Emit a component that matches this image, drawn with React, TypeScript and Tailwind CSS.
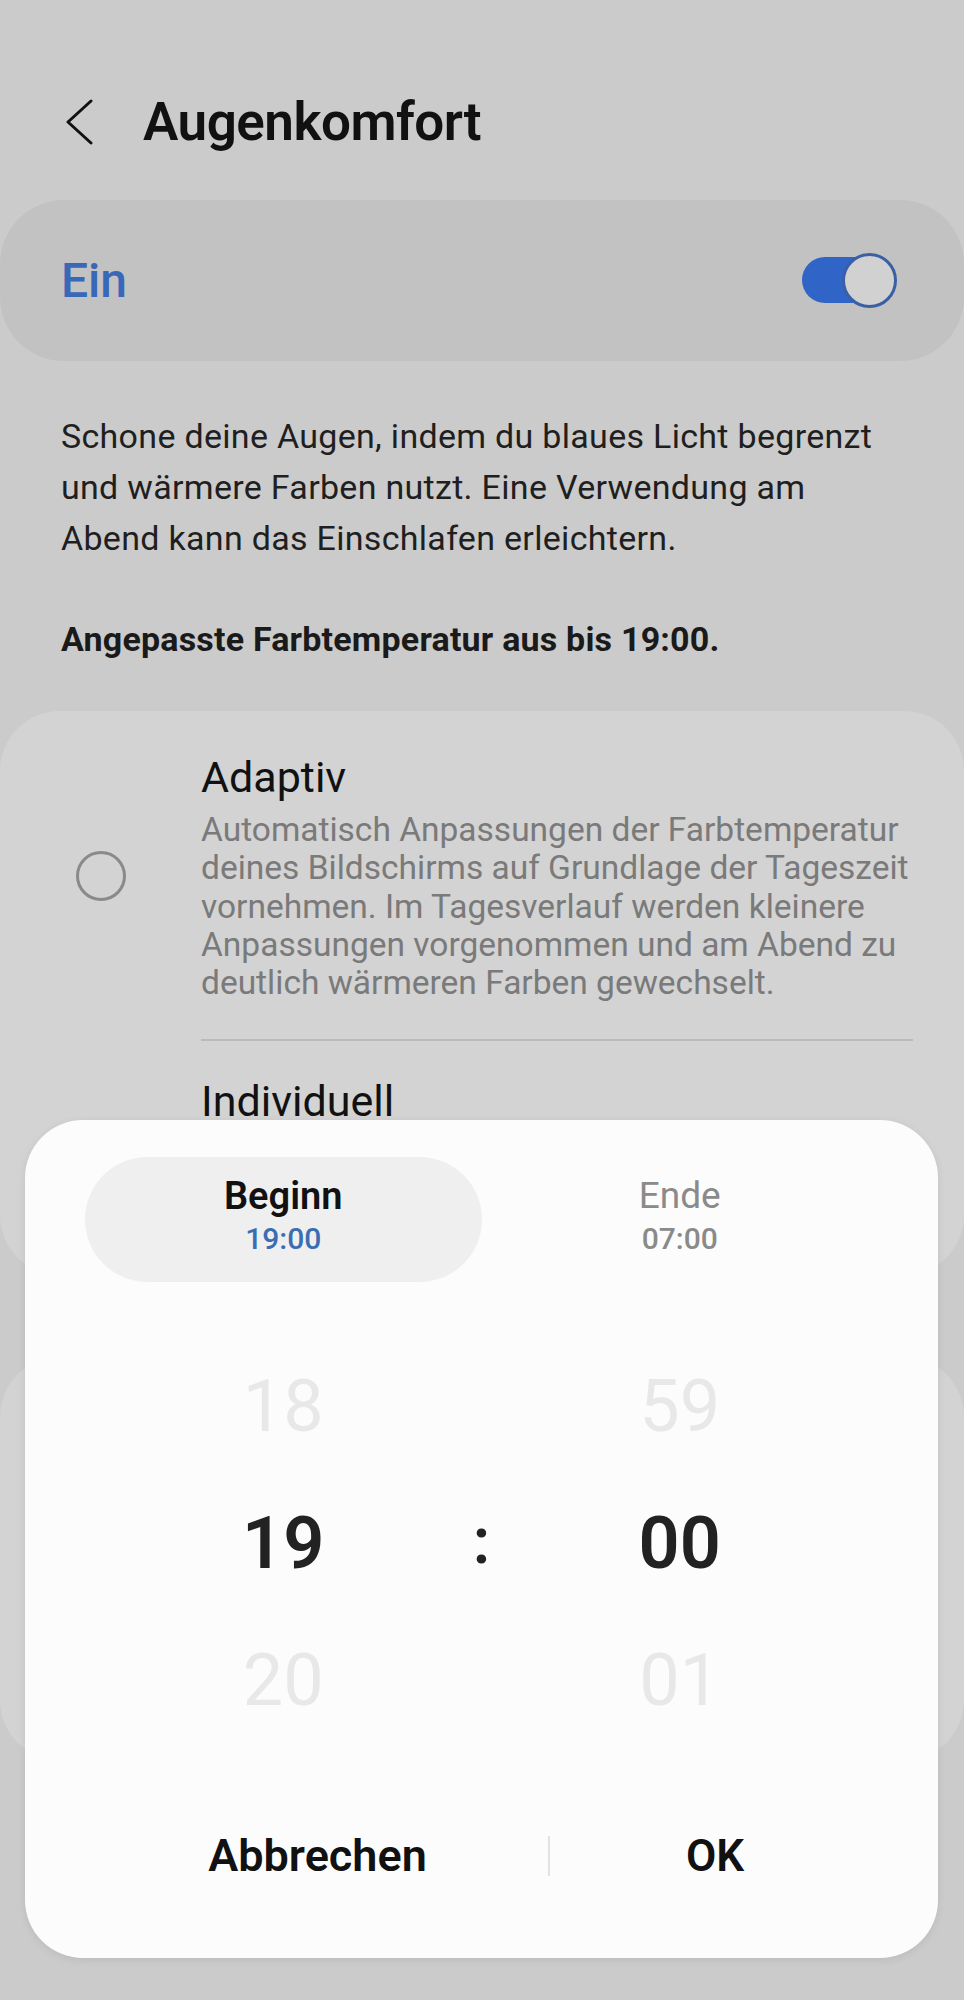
export default function App() {
  const font = { fontFamily: 'Roboto, "Noto Sans", sans-serif' };

  return (
    <div
      className="relative w-[964px] h-[2000px] overflow-hidden bg-[#cbcbcb] text-[#111]"
      style={font}
    >
      {/* Header */}
      <div className="flex items-center h-[90px] mt-[77px] pl-[64px]">
        <svg width="30" height="46" viewBox="0 0 30 46" fill="none">
          <path d="M27 2 L4 23 L27 44" stroke="#111" strokeWidth="3" strokeLinecap="round" strokeLinejoin="round" />
        </svg>
        <h1 className="ml-[49px] text-[53px] font-semibold leading-none tracking-[-0.5px]">Augenkomfort</h1>
      </div>

      {/* Ein switch card */}
      <div className="mt-[33px] h-[161px] rounded-[64px] bg-[#c2c2c2] flex items-center justify-between pl-[61px] pr-[67px]">
        <span className="text-[48px] font-medium text-[#3a68b8] leading-none">Ein</span>
        <div className="relative w-[95px] h-[55px]">
          <div className="absolute left-0 top-[4px] w-[80px] h-[46px] rounded-full bg-[#3064c6]" />
          <div className="absolute right-0 top-0 w-[55px] h-[55px] rounded-full border-[3px] border-[#3a5fa5] bg-[#d1d1d1]" />
        </div>
      </div>

      {/* Description */}
      <p className="mt-[50px] pl-[61px] whitespace-nowrap text-[34px] tracking-[0.3px] leading-[51px] text-[#1f1f1f]">
        Schone deine Augen, indem du blaues Licht begrenzt
        <br />
        und wärmere Farben nutzt. Eine Verwendung am
        <br />
        Abend kann das Einschlafen erleichtern.
      </p>
      <p className="mt-[50px] pl-[61px] whitespace-nowrap text-[34px] tracking-[0.2px] leading-[51px] font-bold text-[#1a1a1a]">
        Angepasste Farbtemperatur aus bis 19:00.
      </p>

      {/* Options card */}
      <div className="mt-[46px] h-[564px] rounded-[60px] bg-[#d3d3d3] flex">
        <div className="w-[201px] shrink-0 flex items-start justify-center pt-[140px]">
          <div className="w-[50px] h-[50px] rounded-full border-[3px] border-[#8a8a8a]" />
        </div>
        <div className="flex-1 min-w-0 pr-[51px] pt-[41px]">
          <div className="text-[43px] leading-[50px] text-[#111]">Adaptiv</div>
          <p className="mt-[9px] whitespace-nowrap text-[33.5px] leading-[38.3px] text-[#7a7a7a]">
            Automatisch Anpassungen der Farbtemperatur
            <br />
            deines Bildschirms auf Grundlage der Tageszeit
            <br />
            vornehmen. Im Tagesverlauf werden kleinere
            <br />
            Anpassungen vorgenommen und am Abend zu
            <br />
            deutlich wärmeren Farben gewechselt.
          </p>
          <div className="mt-[37px] h-[2px] bg-[#bababa]" />
          <div className="mt-[35px] text-[43px] leading-[50px] text-[#111]">Individuell</div>
        </div>
      </div>

      {/* Second card (behind dialog) */}
      <div className="mt-[82px] h-[403px] rounded-[60px] bg-[#d3d3d3]" />

      {/* Time picker dialog */}
      <div className="absolute left-[25px] top-[1120px] w-[913px] h-[838px] rounded-[58px] bg-[#fcfcfc] shadow-[0_2px_8px_rgba(0,0,0,0.08)]">
        <div className="flex px-[60px] pt-[37px]">
          <div className="w-[397px] h-[125px] rounded-full bg-[#efefef] flex flex-col items-center pt-[18px]">
            <span className="text-[38px] leading-[42px] font-semibold text-[#111]">Beginn</span>
            <span className="mt-[4px] text-[30px] leading-[36px] font-medium text-[#3a6db3]">19:00</span>
          </div>
          <div className="w-[397px] h-[125px] flex flex-col items-center pt-[18px]">
            <span className="text-[37px] leading-[42px] text-[#8a8a8a]">Ende</span>
            <span className="mt-[4px] text-[30px] leading-[36px] font-medium text-[#8a8a8a]">07:00</span>
          </div>
        </div>

        <div className="flex px-[60px] mt-[56px]">
          <div className="w-[397px] flex flex-col items-center">
            <div className="h-[137px] flex items-center text-[72px] text-[#e8e8e8]">18</div>
            <div className="h-[137px] flex items-center text-[72px] font-semibold text-[#222]">19</div>
            <div className="h-[137px] flex items-center text-[72px] text-[#e8e8e8]">20</div>
          </div>
          <div className="w-0 flex flex-col items-center">
            <div className="h-[137px]" />
            <div className="h-[137px] flex items-center text-[64px] font-semibold text-[#222] pb-[4px]">:</div>
          </div>
          <div className="w-[397px] flex flex-col items-center">
            <div className="h-[137px] flex items-center text-[72px] text-[#e8e8e8]">59</div>
            <div className="h-[137px] flex items-center text-[72px] font-semibold text-[#222]">00</div>
            <div className="h-[137px] flex items-center text-[72px] text-[#e8e8e8]">01</div>
          </div>
        </div>

        <div className="flex items-center mt-[67px] h-[80px]">
          <div className="w-[523px] flex justify-center pl-[62px]">
            <span className="text-[45px] font-semibold text-[#111]">Abbrechen</span>
          </div>
          <div className="w-[2px] h-[40px] bg-[#e3e3e3]" />
          <div className="flex-1 flex justify-center pr-[58px]">
            <span className="text-[44px] font-semibold text-[#111]">OK</span>
          </div>
        </div>
      </div>
    </div>
  );
}
